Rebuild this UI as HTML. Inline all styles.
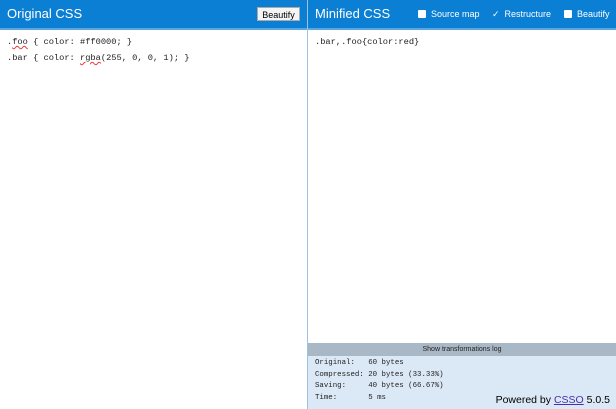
<!DOCTYPE html>
<html><head><style>
body{margin:0;width:616px;height:409px;overflow:hidden;font-family:"Liberation Sans",sans-serif;background:#fff;position:relative}
.hdr{position:absolute;top:0;left:0;width:616px;height:28px;background:#0a7fd3;color:#fff}
.t{position:absolute;top:6px;font-size:13px}
.btn{position:absolute;left:257px;top:7px;width:43px;height:14px;background:#f4f4f4;border:1px solid #aaa;color:#000;font-size:9px;line-height:14px;text-align:center;box-sizing:border-box}
.cb{position:absolute;top:9px;font-size:9px}
.cb i{display:inline-block;width:8px;height:8px;background:#fff;border-radius:1px;vertical-align:-1px;margin-right:5px}
.div{position:absolute;left:307px;top:0;width:1px;height:409px;background:#9cc3e6}
.hl{position:absolute;top:28px;left:0;width:616px;height:2px;background:#5aa6e0}
pre{margin:0;position:absolute;font-family:"Liberation Mono",monospace;font-size:8.7px;line-height:16px;color:#222}
.bar{position:absolute;left:308px;top:343px;width:308px;height:13px;background:#a9b8c6;font-size:7px;text-align:center;line-height:13px;color:#222}
.st{position:absolute;left:308px;top:356px;width:308px;height:53px;background:#dbe8f5}
u{text-decoration:underline wavy #e33;text-decoration-thickness:1px}
</style></head><body>
<div class="hdr">
<div class="t" style="left:7px">Original CSS</div>
<div class="btn">Beautify</div>
<div class="t" style="left:315px">Minified CSS</div>
<div class="cb" style="left:418px"><i></i>Source map</div>
<div class="cb" style="left:492px"><span style="margin-right:5px">✓</span>Restructure</div>
<div class="cb" style="left:564px"><i></i>Beautify</div>
</div>
<div class="hl"></div>
<div class="div"></div>
<pre style="left:7px;top:34px">.<u>foo</u> { color: #ff0000; }
.bar { color: <u>rgba</u>(255, 0, 0, 1); }</pre>
<pre style="left:315px;top:34px">.bar,.foo{color:red}</pre>
<div class="bar">Show transformations log</div>
<div class="st">
<pre style="left:7px;top:2px;font-size:7.4px;line-height:11.5px">Original:   60 bytes
Compressed: 20 bytes (33.33%)
Saving:     40 bytes (66.67%)
Time:       5 ms</pre>
<div style="position:absolute;right:6px;bottom:3px;font-size:10.5px">Powered by <span style="color:#4a2fb0;text-decoration:underline">CSSO</span> 5.0.5</div>
</div>
</body></html>
